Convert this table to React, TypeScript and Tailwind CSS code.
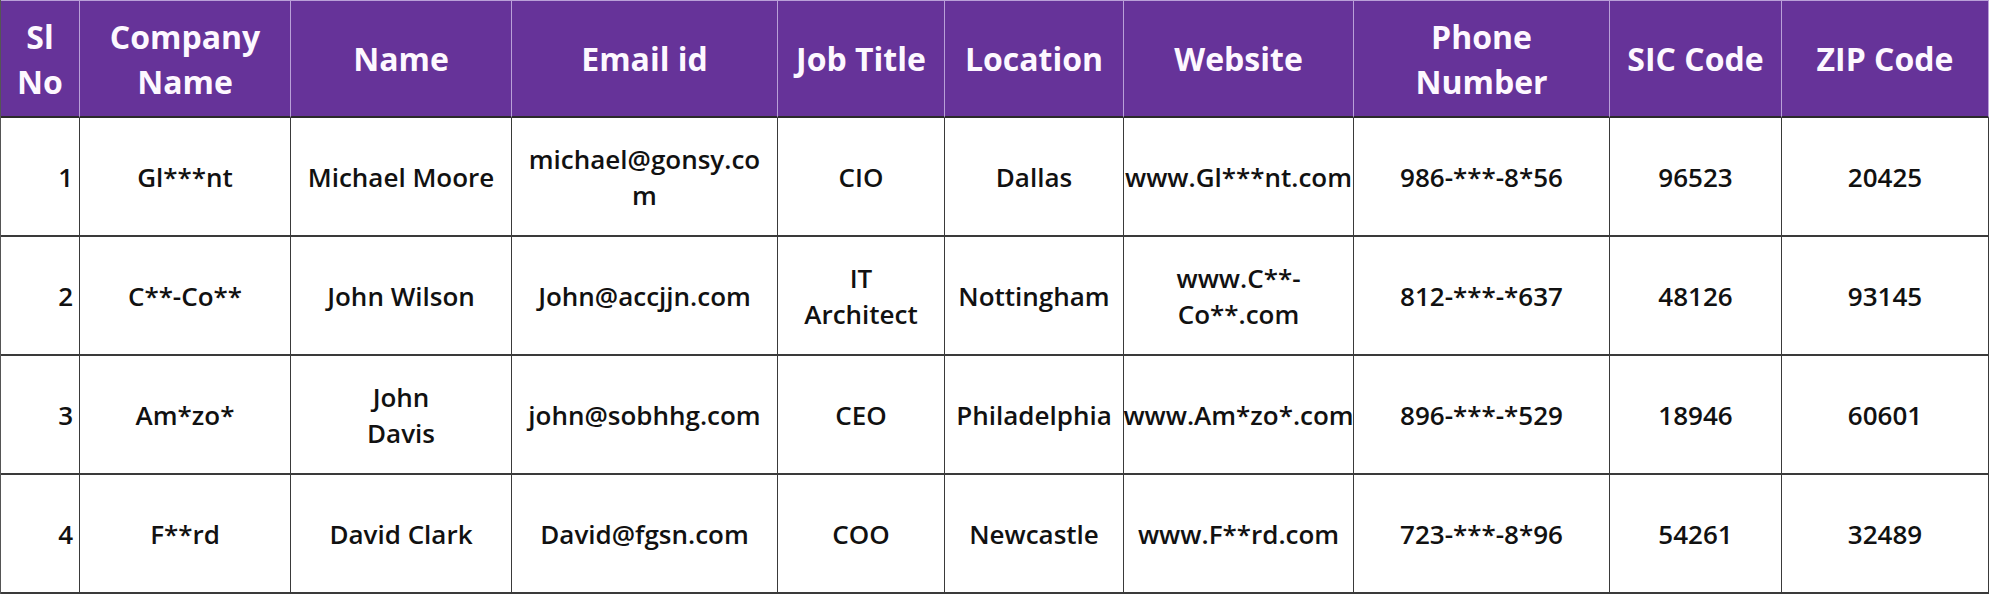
const headers = [
  ["Sl", "No"],
  ["Company", "Name"],
  ["Name"],
  ["Email id"],
  ["Job Title"],
  ["Location"],
  ["Website"],
  ["Phone", "Number"],
  ["SIC Code"],
  ["ZIP Code"],
];

const rows: string[][][] = [
  [["1"], ["Gl***nt"], ["Michael Moore"], ["michael@gonsy.co", "m"], ["CIO"], ["Dallas"], ["www.Gl***nt.com"], ["986-***-8*56"], ["96523"], ["20425"]],
  [["2"], ["C**-Co**"], ["John Wilson"], ["John@accjjn.com"], ["IT", "Architect"], ["Nottingham"], ["www.C**-", "Co**.com"], ["812-***-*637"], ["48126"], ["93145"]],
  [["3"], ["Am*zo*"], ["John", "Davis"], ["john@sobhhg.com"], ["CEO"], ["Philadelphia"], ["www.Am*zo*.com"], ["896-***-*529"], ["18946"], ["60601"]],
  [["4"], ["F**rd"], ["David Clark"], ["David@fgsn.com"], ["COO"], ["Newcastle"], ["www.F**rd.com"], ["723-***-8*96"], ["54261"], ["32489"]],
];

function Lines({ lines }: { lines: string[] }) {
  return (
    <>
      {lines.map((l, i) => (
        <span key={i} className="block whitespace-nowrap">
          {l}
        </span>
      ))}
    </>
  );
}

export default function App() {
  return (
    <div className="h-[600px] w-[2000px] bg-white font-['Open_Sans',sans-serif]">
      <div className="grid w-[1988px] grid-cols-[79px_211px_221px_266px_167px_179px_230px_256px_172px_207px] border-l border-[#555]">
        {headers.map((h, i) => (
          <div
            key={i}
            className="flex h-[118px] flex-col items-center justify-center border-r border-t border-r-[#b9a0d8] border-t-[#b9a0d8] border-b-2 border-b-[#2b2b2b] bg-[#663399] text-center text-[32px] font-bold leading-[45px] text-[#fdf8ff] last:border-r-[#555]"
          >
            <Lines lines={h} />
          </div>
        ))}
        {rows.map((r, ri) =>
          r.map((c, ci) => (
            <div
              key={`${ri}-${ci}`}
              className={
                ci === 0
                  ? "flex h-[119px] flex-col items-end justify-center border-b-2 border-r-[1.5px] border-[#3a3a3a] pr-[6px] text-[26px] font-semibold leading-[36px] text-[#111]"
                  : "flex h-[119px] flex-col items-center justify-center border-b-2 border-r-[1.5px] border-[#3a3a3a] text-center text-[26px] font-semibold leading-[36px] text-[#111]"
              }
            >
              <Lines lines={c} />
            </div>
          ))
        )}
      </div>
    </div>
  );
}
